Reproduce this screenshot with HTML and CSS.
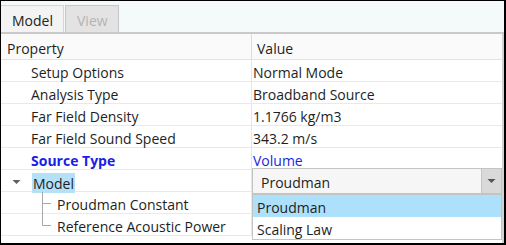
FILE: index.html
```html
<!DOCTYPE html>
<html lang="en">
<head>
  <meta charset="UTF-8">
  <title>Model properties</title>
  <link rel="stylesheet" href="styles.css">
</head>
<body>
  <div class="frame">
    <div class="tabs">
      <div class="tab active">Model</div>
      <div class="tab disabled">View</div>
    </div>

    <div class="grid">
      <div class="row head">
        <div class="cell name">Property</div>
        <div class="cell value">Value</div>
      </div>
      <div class="row">
        <div class="cell name lvl1">Setup Options</div>
        <div class="cell value">Normal Mode</div>
      </div>
      <div class="row">
        <div class="cell name lvl1">Analysis Type</div>
        <div class="cell value">Broadband Source</div>
      </div>
      <div class="row">
        <div class="cell name lvl1">Far Field Density</div>
        <div class="cell value">1.1766 kg/m3</div>
      </div>
      <div class="row">
        <div class="cell name lvl1">Far Field Sound Speed</div>
        <div class="cell value">343.2 m/s</div>
      </div>
      <div class="row changed">
        <div class="cell name lvl1">Source Type</div>
        <div class="cell value">Volume</div>
      </div>
      <div class="row">
        <div class="cell name">
          <svg class="expander" width="9" height="6" viewBox="0 0 9 6"><path d="M0.5 1 L8.5 1 L4.5 5 Z" fill="#5f5f5f"/></svg>
          <span class="selected">Model</span>
        </div>
        <div class="cell value editing">
          <div class="combo">
            <span class="combo-text">Proudman</span>
            <span class="combo-btn">
              <svg width="9" height="6" viewBox="0 0 9 6"><path d="M0.5 1 L8.5 1 L4.5 5 Z" fill="#555"/></svg>
            </span>
            <ul class="combo-list">
              <li class="hot">Proudman</li>
              <li>Scaling Law</li>
            </ul>
          </div>
        </div>
      </div>
      <div class="row">
        <div class="cell name lvl2">
          <svg class="branch" width="16" height="22" viewBox="0 0 16 22"><path d="M1.5 0 V22 M1.5 11.5 H10" stroke="#a8a8a8" fill="none"/></svg>
          <span class="label">Proudman Constant</span>
        </div>
        <div class="cell value"></div>
      </div>
      <div class="row">
        <div class="cell name lvl2">
          <svg class="branch" width="16" height="22" viewBox="0 0 16 22"><path d="M1.5 0 V11.5 H10" stroke="#a8a8a8" fill="none"/></svg>
          <span class="label">Reference Acoustic Power</span>
        </div>
        <div class="cell value"></div>
      </div>
    </div>
  </div>
</body>
</html>
```

FILE: styles.css
```css
body {
  margin: 0;
  padding: 0;
  background: #fff;
}

.frame {
  width: 506px;
  height: 245px;
  box-sizing: border-box;
  border-top: 1px solid #000;
  border-left: 1px solid #000;
  border-right: 2px solid #000;
  border-bottom: 2px solid #000;
  font-family: "Open Sans", "Noto Sans", sans-serif;
  font-size: 14px;
  color: #1e1e1e;
  overflow: hidden;
  display: flex;
  flex-direction: column;
}

/* TABS */
.tabs {
  height: 33px;
  flex: none;
  box-sizing: border-box;
  padding-top: 4px;
  background: #f4f9fa;
  border-bottom: 2px solid #c9c9c9;
  display: flex;
  align-items: flex-end;
  gap: 1px;
}

.tab {
  height: 27px;
  box-sizing: border-box;
  padding: 2px 10px 0;
  display: flex;
  align-items: center;
  border: 1px solid #d6d6d6;
  border-bottom: none;
}

.tab.active {
  background: #f3f3f3;
  color: #222;
  padding-left: 11px;
  width: 64px;
  margin-left: -1px;
}

.tab.disabled {
  background: #e3e3e3;
  border-color: #c8c8c8;
  color: #b4b4b4;
  width: 54px;
  padding-left: 11px;
}

/* PROPERTY GRID */
.grid {
  flex: 1;
  border-right: 2px solid #d2d2d2;
}

.row {
  display: grid;
  grid-template-columns: 251px 1fr;
  height: 22px;
  border-bottom: 1px solid #e9e9e9;
  box-sizing: border-box;
}

.row.head {
  height: 26px;
  background: #fafafa;
  border-bottom: 1px solid #e2e2e2;
}

.cell {
  display: flex;
  align-items: center;
  white-space: nowrap;
  padding-top: 3px;
  box-sizing: border-box;
}

.row.head .cell {
  padding-top: 4px;
}

.cell.name {
  border-right: 1px solid #e6e6e6;
  padding-left: 6px;
}

.row.head .cell.name {
  border-right-color: #dcdcdc;
}

.row.head .cell.value {
  padding-left: 5px;
}

.cell.value {
  padding-left: 1px;
}

.cell.name.lvl1 {
  padding-left: 30px;
}

.cell.name.lvl2 {
  padding-top: 0;
  padding-left: 40px;
}

.cell.name.lvl2 .label {
  padding-top: 3px;
}

.branch {
  flex: none;
  align-self: flex-start;
}

.expander {
  margin-left: 5px;
  margin-right: 11px;
  margin-top: -2px;
}

.selected {
  background: #b3e1f8;
  padding: 1px 1px 0;
  height: 20px;
  line-height: 20px;
  box-sizing: border-box;
}

.row.changed .cell {
  color: #1a1ee6;
}

.row.changed .cell.name {
  font-weight: bold;
}

/* COMBO EDITOR */
.cell.editing {
  position: relative;
  padding-top: 0;
}

.combo {
  position: absolute;
  top: -2px;
  left: 0;
  right: 0;
  height: 26px;
  box-sizing: border-box;
  border: 1px solid #c4c4c4;
  background: #f6f6f6;
  display: flex;
  align-items: center;
}

.combo-text {
  flex: 1;
  padding-left: 8px;
  padding-top: 2px;
}

.combo-btn {
  width: 19px;
  height: 24px;
  background: #d9d9d9;
  border-left: 1px solid #c4c4c4;
  display: flex;
  align-items: center;
  justify-content: center;
}

.combo-list {
  position: absolute;
  top: 25px;
  left: -1px;
  right: -1px;
  margin: 0;
  padding: 0;
  list-style: none;
  background: #fff;
  border: 1px solid #c4c4c4;
}

.combo-list li {
  height: 22px;
  box-sizing: border-box;
  padding: 3px 0 0 4px;
  line-height: 19px;
}

.combo-list li.hot {
  background: #ade0fb;
}
```
